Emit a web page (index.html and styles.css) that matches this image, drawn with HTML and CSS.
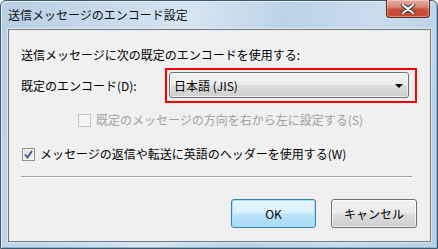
FILE: index.html
```html
<!DOCTYPE html>
<html lang="ja">
<head>
    <meta charset="UTF-8">
    <title>送信メッセージのエンコード設定</title>
    <link rel="stylesheet" href="styles.css">
</head>
<body>
<div class="window">
    <!-- Barra de título -->
    <div class="titlebar">
        <span class="title">送信メッセージのエンコード設定</span>
        <button class="close" aria-label="閉じる">
            <svg width="16" height="10" viewBox="0 0 16 10">
                <path d="M3 1 L13 9 M13 1 L3 9" stroke="#3a3a3a" stroke-width="4.2" stroke-linecap="round"/>
                <path d="M3 1 L13 9 M13 1 L3 9" stroke="#ffffff" stroke-width="2.2" stroke-linecap="round"/>
            </svg>
        </button>
    </div>

    <!-- Contenido del diálogo -->
    <div class="client">
        <p class="lead">送信メッセージに次の既定のエンコードを使用する:</p>

        <div class="row">
            <label class="label">既定のエンコード(D):</label>
            <div class="highlight">
                <div class="select">
                    <span>日本語 (JIS)</span>
                    <span class="arrow"></span>
                </div>
            </div>
        </div>

        <div class="check disabled">
            <span class="box"></span>
            <span>既定のメッセージの方向を右から左に設定する(S)</span>
        </div>

        <div class="check first">
            <span class="box checked">
                <svg width="9" height="9" viewBox="0 0 9 9">
                    <path d="M1 4.5 L3.5 7.5 L8 1" fill="none" stroke="#3c4f8c" stroke-width="1.8"/>
                </svg>
            </span>
            <span>メッセージの返信や転送に英語のヘッダーを使用する(W)</span>
        </div>

        <div class="sep"></div>

        <div class="buttons">
            <button class="btn default">OK</button>
            <button class="btn">キャンセル</button>
        </div>
    </div>
</div>
</body>
</html>
```

FILE: styles.css
```css
body {
    margin: 0;
    padding: 0;
    font-family: "Noto Sans CJK JP", "Noto Sans", sans-serif;
    font-size: 12px;
    color: #000;
    background: #fff;
}
.window {
    width: 438px;
    height: 249px;
    box-sizing: border-box;
    padding: 0 6px 6px 7px;
    display: flex;
    flex-direction: column;
    border-radius: 6px 6px 0 0;
    border: 1px solid #3e5b6d;
    background: linear-gradient(100deg, #b7cfe4 0%, #cadcec 25%, #d6e5f1 40%, #bcd3e7 60%, #c9dcec 80%, #b8d0e5 100%);
    box-shadow: inset 1px 1px 0 #e4eef7, inset -1px -1px 0 #8fb4d0;
}
.titlebar {
    height: 28px;
    display: flex;
    align-items: flex-start;
    flex-shrink: 0;
}
.title {
    margin: 6px 0 0 0;
    line-height: 16px;
    color: #111;
}
.close {
    margin: -1px 0 0 auto;
    width: 44px;
    height: 18px;
    margin-right: 1px;
    padding: 0;
    border: 1px solid #5e2a22;
    border-top: none;
    border-radius: 0 0 4px 4px;
    background: linear-gradient(#e7ab9d 0%, #d8897a 40%, #c7503b 55%, #d1472f 100%);
    box-shadow: inset 0 0 0 1px rgba(255, 255, 255, 0.35);
    display: flex;
    align-items: center;
    justify-content: center;
}
.client {
    flex: 1;
    border: 1px solid #6f7b84;
    background-color: #f0f0f0;
    padding: 17px 13px 0 12px;
    box-shadow: 0 0 0 1px #dbe8f3;
}
.lead {
    margin: 0;
    line-height: 16px;
}
.row {
    display: flex;
    align-items: center;
    margin-top: 5px;
}
.label {
    width: 147px;
    line-height: 16px;
}
.highlight {
    border: 2px solid #ff0000;
    padding: 2px 6px 3px 2px;
}
.select {
    width: 240px;
    height: 26px;
    box-sizing: border-box;
    border: 1px solid #707070;
    border-radius: 3px;
    padding: 0 5px 0 4px;
    display: flex;
    align-items: center;
    justify-content: space-between;
    background: linear-gradient(#f2f2f2 0%, #ebebeb 48%, #dddddd 52%, #cfcfcf 100%);
    box-shadow: inset 0 0 0 1px rgba(255, 255, 255, 0.6);
}
.arrow {
    width: 0;
    height: 0;
    border-left: 4px solid transparent;
    border-right: 4px solid transparent;
    border-top: 4px solid #000;
    margin-top: 1px;
}
.check {
    display: flex;
    align-items: center;
    gap: 5px;
    line-height: 16px;
}
.check.disabled {
    margin: 9px 0 0 57px;
    color: #a0a0a0;
}
.check.first {
    margin-top: 18px;
    margin-left: 1px;
}
.box {
    width: 11px;
    height: 11px;
    border: 1px solid #8f8f8f;
    background: linear-gradient(135deg, #dcdcdc, #f8f8f8);
    box-shadow: inset 0 0 0 1px #f4f4f4;
    display: flex;
    align-items: center;
    justify-content: center;
}
.disabled .box {
    border-color: #c4c4c4;
    background: #f4f4f4;
}
.sep {
    margin: 14px 5px 0 0;
    height: 1px;
    background: #a0a0a0;
    border-bottom: 1px solid #fff;
}
.buttons {
    display: flex;
    justify-content: flex-end;
    gap: 15px;
    margin-top: 21px;
}
.btn {
    width: 85px;
    height: 29px;
    font-family: inherit;
    font-size: 12px;
    border: 1px solid #707070;
    border-radius: 3px;
    background: linear-gradient(#f2f2f2 0%, #ebebeb 48%, #dddddd 52%, #cfcfcf 100%);
    box-shadow: inset 0 0 0 1px rgba(255, 255, 255, 0.7);
    padding: 0;
    color: #000;
}
.btn + .btn {
    width: 86px;
}
.btn.default {
    border-color: #3c7fb1;
    background: linear-gradient(#eaf6fd 0%, #d9f0fc 48%, #bee6fd 52%, #a7d9f5 100%);
    box-shadow: inset 0 0 0 1px #9fe2f9;
}
```
